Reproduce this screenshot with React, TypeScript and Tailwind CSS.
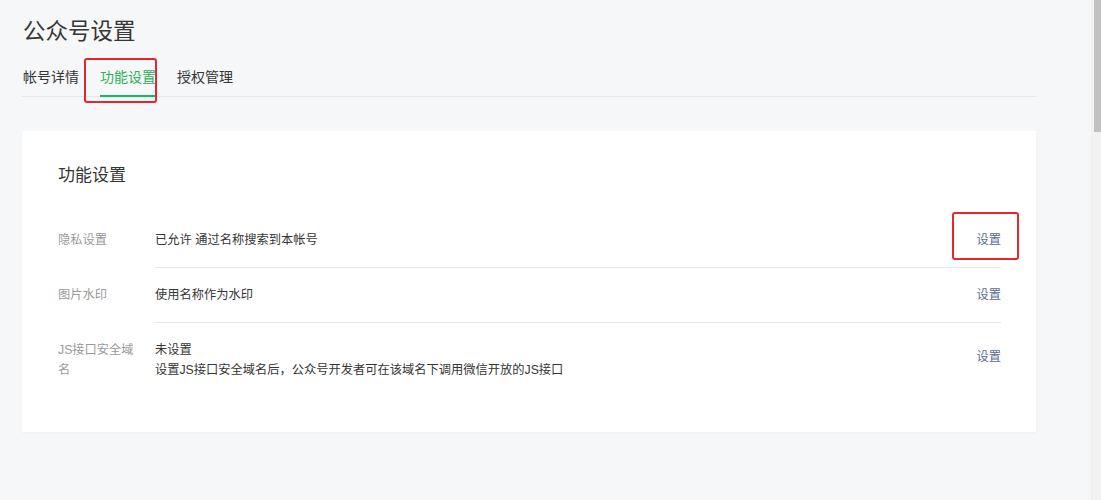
import React from "react";

interface SettingRow {
  label: string;
  lines: string[];
  highlight?: boolean;
}

const rows: SettingRow[] = [
  { label: "隐私设置", lines: ["已允许 通过名称搜索到本帐号"], highlight: true },
  { label: "图片水印", lines: ["使用名称作为水印"] },
  {
    label: "JS接口安全域名",
    lines: ["未设置", "设置JS接口安全域名后，公众号开发者可在该域名下调用微信开放的JS接口"],
  },
];

const tabs = ["帐号详情", "功能设置", "授权管理"];

export default function App() {
  const activeTab = "功能设置";

  return (
    <div
      className="flex h-[500px] w-full overflow-hidden bg-[#f6f7f9] text-[#353535]"
      style={{ fontFamily: '"Liberation Sans", "Noto Sans CJK SC", sans-serif' }}
    >
      <main className="flex-1 pl-[22px] pr-[55px] pt-[16px]">
        {/* Page title */}
        <h1 className="pl-[1px] text-[22.5px] leading-[32px] font-normal text-[#353535]">公众号设置</h1>

        {/* Tabs */}
        <nav className="mt-[9px] flex h-[40px] gap-[21px] border-b border-[#e4e7eb] pl-[1px]">
          {tabs.map((tab) => (
            <div
              key={tab}
              className={`relative -mb-[1px] flex items-center text-[14px] leading-[20px] ${
                tab === activeTab
                  ? "border-b-2 border-[#07c160] pt-[2px] text-[#2fb05a]"
                  : "text-[#353535]"
              }`}
            >
              {tab}
              {tab === activeTab && (
                <span className="pointer-events-none absolute -left-[16px] top-[1px] h-[45px] w-[73px] rounded-[3px] border-2 border-[#e5262c]" />
              )}
            </div>
          ))}
        </nav>

        {/* Card */}
        <section className="mt-[34px] bg-white pb-[35px] pl-[36px] pr-[35px] pt-[33px] shadow-[0_1px_2px_rgba(0,0,0,0.03)]">
          <h2 className="text-[17px] leading-[24px] font-normal text-[#353535]">功能设置</h2>

          <div className="mt-[25px]">
            {rows.map((row, idx) => (
              <div key={row.label} className="flex">
                <div className="mr-[19px] w-[78px] shrink-0 py-[17px] text-[12.25px] leading-[20px] text-[#9a9a9a]">
                  {row.label}
                </div>
                <div
                  className={`flex flex-1 items-start justify-between py-[17px] ${
                    idx < rows.length - 1 ? "border-b border-[#e7e7eb]" : ""
                  }`}
                >
                  <div className="text-[12.25px] leading-[20px] text-[#353535]">
                    {row.lines.map((line) => (
                      <div key={line}>{line}</div>
                    ))}
                  </div>
                  <span
                    className={`relative text-[12.25px] leading-[20px] text-[#576b95] ${
                      row.lines.length > 1 ? "mt-[7px]" : ""
                    }`}
                  >
                    设置
                    {row.highlight && (
                      <span className="pointer-events-none absolute -left-[25px] -top-[18px] h-[48px] w-[67px] rounded-[3px] border-2 border-[#e5262c]" />
                    )}
                  </span>
                </div>
              </div>
            ))}
          </div>
        </section>
      </main>

      {/* Scrollbar */}
      <div className="w-[10px] shrink-0 bg-[#f2f2f2]">
        <div className="ml-[3px] h-[132px] bg-[#c1c1c1]" />
      </div>
    </div>
  );
}
